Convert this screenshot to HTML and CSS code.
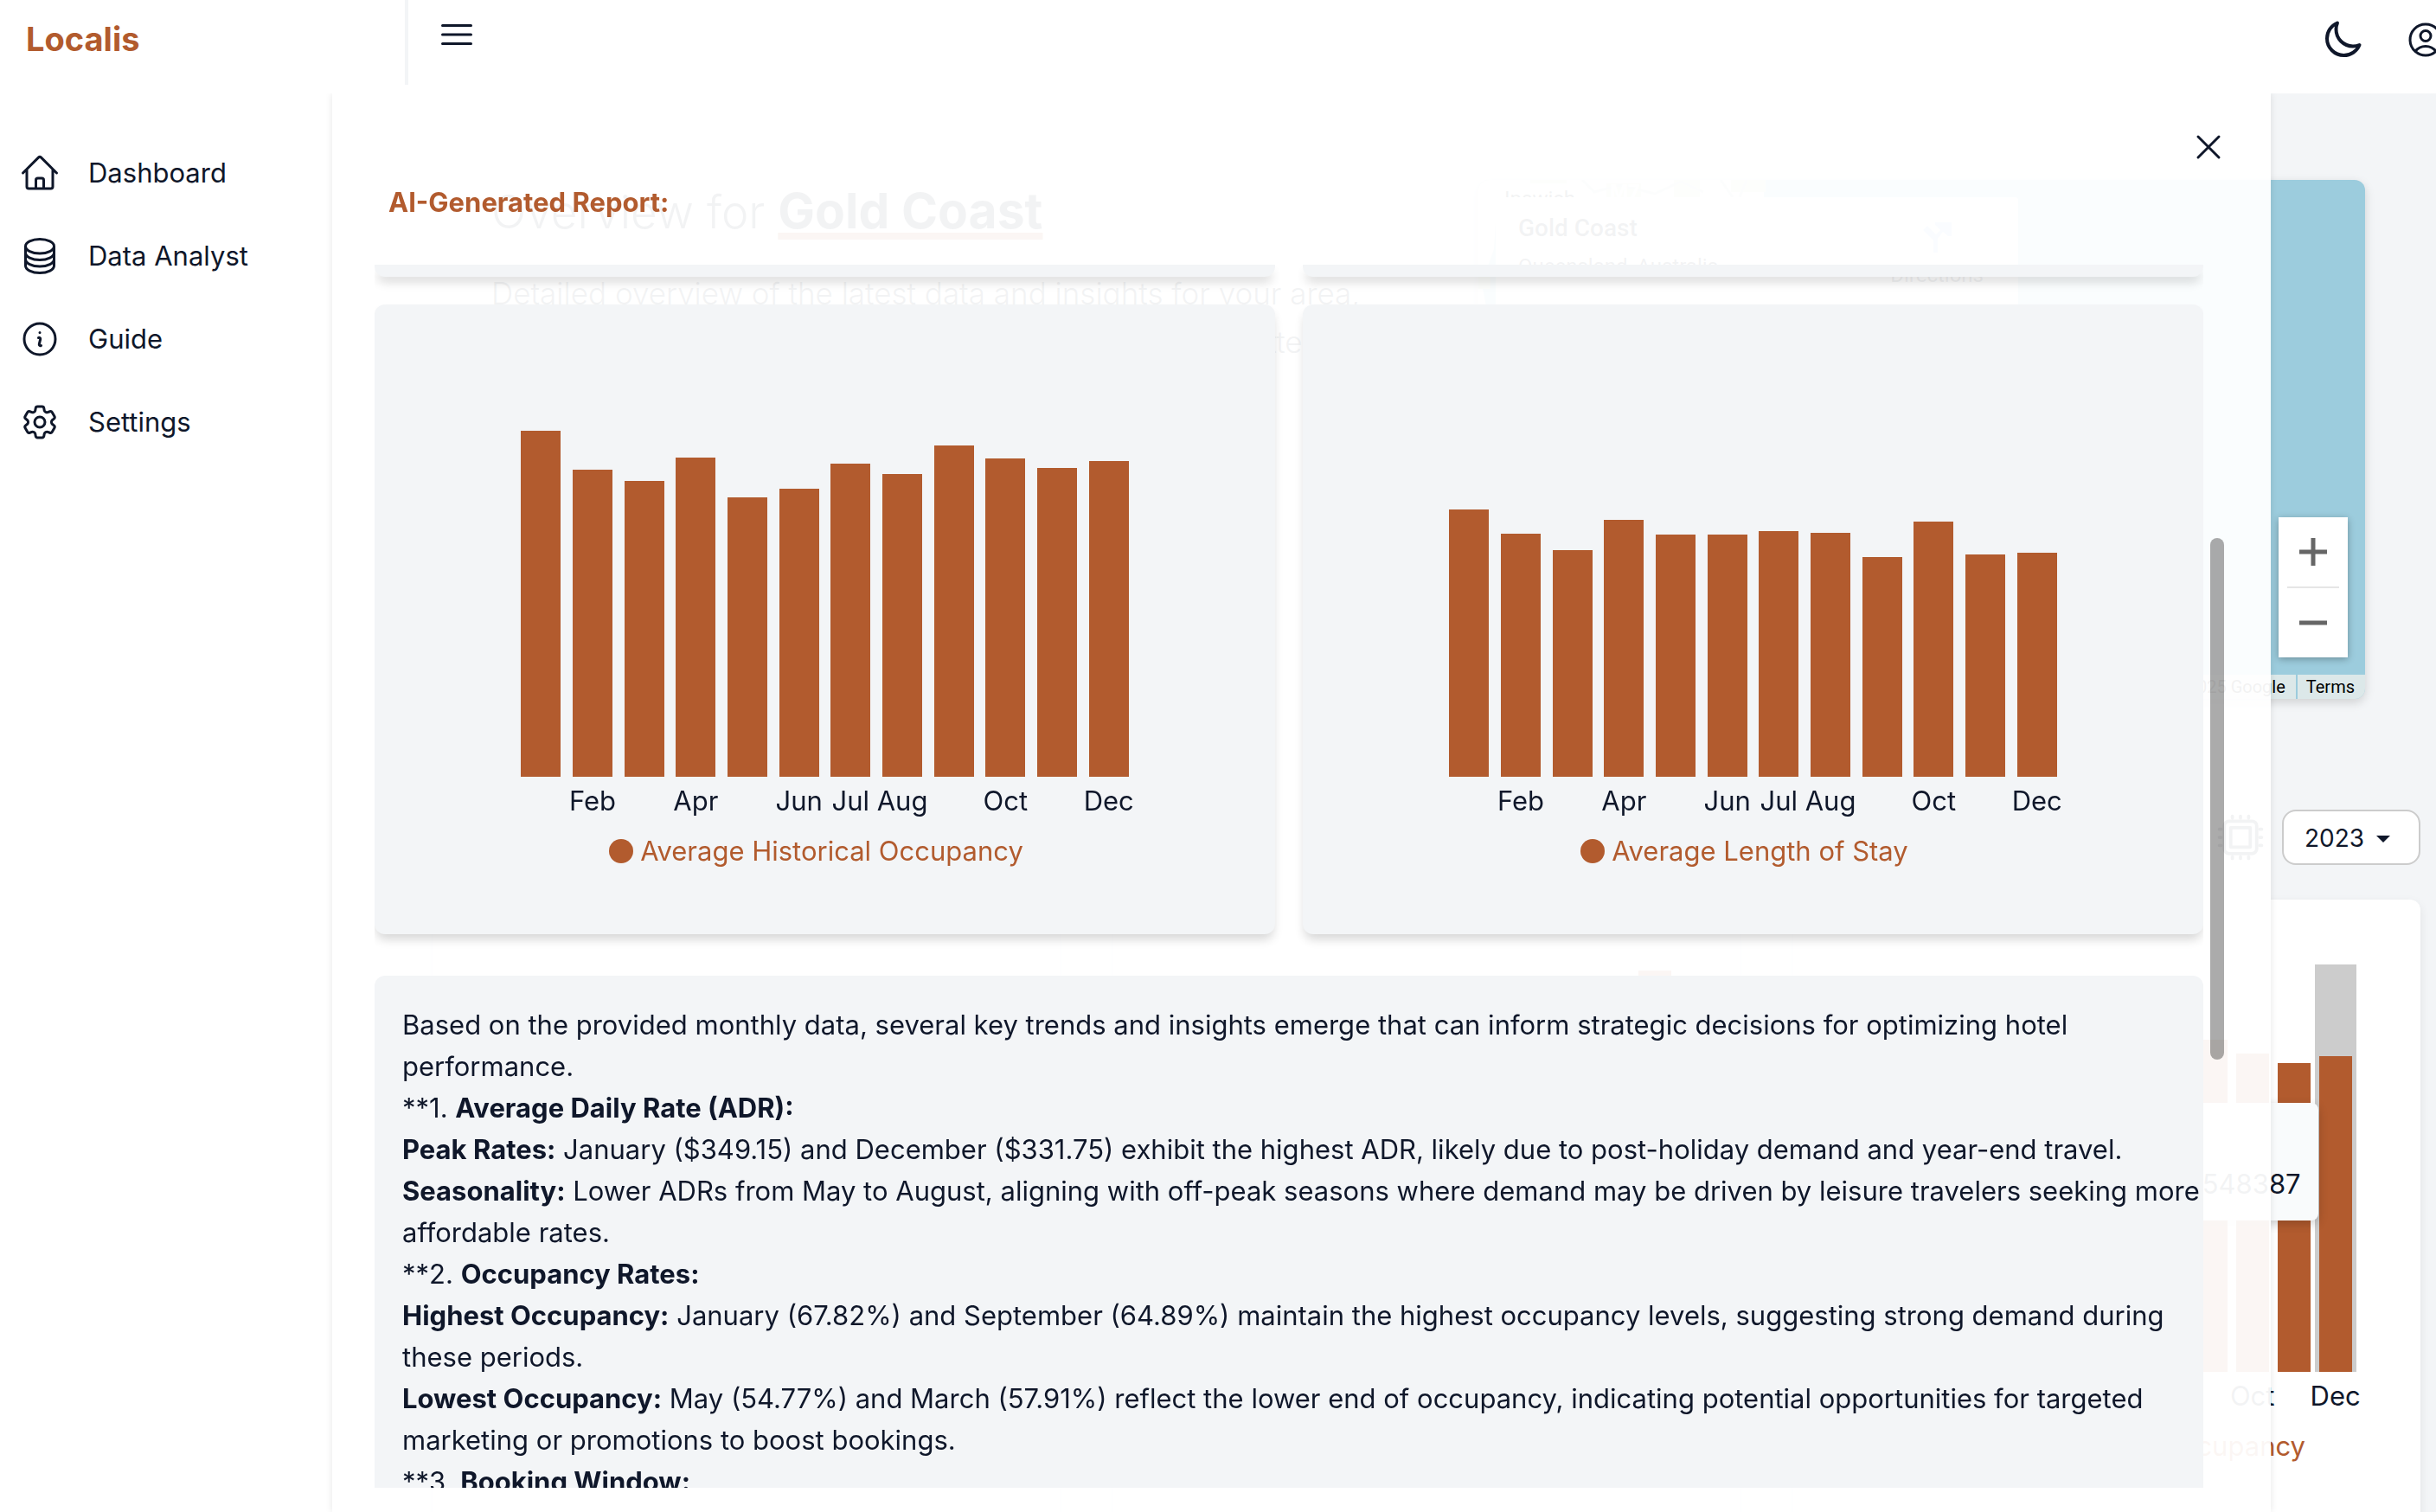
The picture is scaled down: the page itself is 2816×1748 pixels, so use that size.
FILE: index.html
```html
<!DOCTYPE html>
<html lang="en">
<head>
<meta charset="utf-8">
<title>Localis</title>
<link rel="stylesheet" href="styles.css">
</head>
<body>
<header class="topbar">
  <a class="brand" href="#">Localis</a>
  <button class="icon-button menu-button" aria-label="Toggle menu">
    <svg class="icon" viewBox="0 0 24 24"><path d="M3.75 6.75h16.5M3.75 12h16.5m-16.5 5.25h16.5"/></svg>
  </button>
  <div class="topbar-actions">
    <button class="icon-button" aria-label="Dark mode">
      <svg class="icon icon-bold" viewBox="0 0 24 24"><path d="M21.752 15.002A9.718 9.718 0 0 1 18 15.75c-5.385 0-9.75-4.365-9.75-9.75 0-1.33.266-2.597.748-3.752A9.753 9.753 0 0 0 3 11.25C3 16.635 7.365 21 12.75 21a9.753 9.753 0 0 0 9.002-5.998Z"/></svg>
    </button>
    <button class="icon-button" aria-label="Account">
      <svg class="icon" viewBox="0 0 24 24"><path d="M17.982 18.725A7.488 7.488 0 0 0 12 15.75a7.488 7.488 0 0 0-5.982 2.975m11.963 0a9 9 0 1 0-11.963 0m11.963 0A8.966 8.966 0 0 1 12 21a8.966 8.966 0 0 1-5.982-2.275M15 9.75a3 3 0 1 1-6 0 3 3 0 0 1 6 0Z"/></svg>
    </button>
  </div>
</header>

<div class="layout">
  <nav class="sidebar">
    <a class="nav-link" href="#"><svg class="icon" viewBox="0 0 24 24"><path d="m2.25 12 8.954-8.955c.44-.439 1.152-.439 1.591 0L21.75 12M4.5 9.75v10.125c0 .621.504 1.125 1.125 1.125H9.75v-4.875c0-.621.504-1.125 1.125-1.125h2.25c.621 0 1.125.504 1.125 1.125V21h4.125c.621 0 1.125-.504 1.125-1.125V9.75M8.25 21h8.25"/></svg>Dashboard</a>
    <a class="nav-link" href="#"><svg class="icon" viewBox="0 0 24 24"><path d="M20.25 6.375c0 2.278-3.694 4.125-8.25 4.125S3.75 8.653 3.75 6.375m16.5 0c0-2.278-3.694-4.125-8.25-4.125S3.75 4.097 3.75 6.375m16.5 0v11.25c0 2.278-3.694 4.125-8.25 4.125s-8.25-1.847-8.25-4.125V6.375m16.5 0v3.75m-16.5-3.75v3.75m16.5 0v3.75C20.25 16.153 16.556 18 12 18s-8.25-1.847-8.25-4.125v-3.75m16.5 0c0 2.278-3.694 4.125-8.25 4.125s-8.25-1.847-8.25-4.125"/></svg>Data Analyst</a>
    <a class="nav-link" href="#"><svg class="icon" viewBox="0 0 24 24"><path d="m11.25 11.25.041-.02a.75.75 0 0 1 1.063.852l-.708 2.836a.75.75 0 0 0 1.063.853l.041-.021M21 12a9 9 0 1 1-18 0 9 9 0 0 1 18 0Zm-9-3.75h.008v.008H12V8.25Z"/></svg>Guide</a>
    <a class="nav-link" href="#"><svg class="icon" viewBox="0 0 24 24"><path d="M9.594 3.94c.09-.542.56-.94 1.11-.94h2.593c.55 0 1.02.398 1.11.94l.213 1.281c.063.374.313.686.645.87.074.04.147.083.22.127.325.196.72.257 1.075.124l1.217-.456a1.125 1.125 0 0 1 1.37.49l1.296 2.247a1.125 1.125 0 0 1-.26 1.431l-1.003.827c-.293.241-.438.613-.43.992a7.723 7.723 0 0 1 0 .255c-.008.378.137.75.43.991l1.004.827c.424.35.534.955.26 1.43l-1.298 2.247a1.125 1.125 0 0 1-1.369.491l-1.217-.456c-.355-.133-.75-.072-1.076.124a6.47 6.47 0 0 1-.22.128c-.331.183-.581.495-.644.869l-.213 1.281c-.09.543-.56.94-1.11.94h-2.594c-.55 0-1.019-.398-1.11-.94l-.213-1.281c-.062-.374-.312-.686-.644-.87a6.52 6.52 0 0 1-.22-.127c-.325-.196-.72-.257-1.076-.124l-1.217.456a1.125 1.125 0 0 1-1.369-.49l-1.297-2.247a1.125 1.125 0 0 1 .26-1.431l1.004-.827c.292-.24.437-.613.43-.991a6.932 6.932 0 0 1 0-.255c.007-.38-.138-.751-.43-.992l-1.004-.827a1.125 1.125 0 0 1-.26-1.43l1.297-2.247a1.125 1.125 0 0 1 1.37-.491l1.216.456c.356.133.751.072 1.076-.124.072-.044.146-.086.22-.128.332-.183.582-.495.644-.869l.214-1.28Z"/><path d="M15 12a3 3 0 1 1-6 0 3 3 0 0 1 6 0Z"/></svg>Settings</a>
  </nav>

  <main class="dashboard">
    <section class="hero">
      <div class="hero-text">
        <h1 class="hero-title">Overview for <strong>Gold Coast</strong></h1>
        <p class="hero-lead">Detailed overview of the latest data and insights for your area,</p>
        <p class="hero-lead hero-lead-end">to help you plan ahead and make better</p>
      </div>
      <div class="map">
        <svg class="map-land" viewBox="0 0 600 160">
          <path fill="#f1f7ee" d="M0 0h330v20H22l-4 60-14 40 8 40H0z"/>
          <path fill="#cfe8c4" d="M148 4h40v16h-40zM0 112h14v14H0zM60 0h42v4H60zM226 0h30v20h-30zM292 0h40v14h-40z"/>
          <path fill="none" stroke="#c8d3da" stroke-width="3" d="M120 0l14 14 30-8 40 10 30-14 26 12M280 0l14 20M310 0l-8 20"/>
        </svg>
        <span class="map-place">Ipswich</span>
        <span class="map-route">M7</span>
        <div class="map-info">
          <div>
            <p class="map-info-title">Gold Coast</p>
            <p class="map-info-line">Queensland, Australia</p>
          </div>
          <a class="map-directions" href="#"><svg viewBox="0 0 36 36"><path fill="#a3c1f5" d="M14 36V22L2 10l5-5 10 10 5-5-6-6V1h19v16h-4l-6-5-6 8v16z"/></svg>Directions</a>
        </div>
        <div class="map-zoom">
          <button class="zoom-button" aria-label="Zoom in"><svg viewBox="0 0 34 34"><path d="M17 1v32M1 17h32"/></svg></button>
          <button class="zoom-button" aria-label="Zoom out"><svg viewBox="0 0 34 34"><path d="M1 17h32"/></svg></button>
        </div>
        <div class="map-credits"><span class="credit">Map data ©2025 Google</span><a class="credit" href="#">Terms</a></div>
      </div>
    </section>

    <div class="toolbar">
      <svg class="icon icon-chip" viewBox="0 0 24 24"><path d="M8.25 3v-.75M12 3v-.75M15.75 3v-.75M8.25 21v.75M12 21v.75M15.75 21v.75M3 8.25h-.75M3 12h-.75M3 15.75h-.75M21 8.25h.75M21 12h.75M21 15.75h.75M6.75 19.500h10.500a2.250 2.250 0 0 0 2.250-2.250V6.750a2.250 2.250 0 0 0-2.250-2.250H6.750a2.250 2.250 0 0 0-2.250 2.250v10.500a2.250 2.250 0 0 0 2.250 2.250ZM7.500 7.500h9v9h-9z"/></svg>
      <div class="year">
        <select class="year-select" aria-label="Year"><option>2023</option></select>
        <svg class="year-arrow" viewBox="0 0 16 8"><path d="M0 0h16L8 8z"/></svg>
      </div>
    </div>

    <section class="tiles">
      <article class="tile"></article>
      <article class="tile">
        <div class="chart chart-small">
          <div class="bars">
            <div class="slot"><i class="bar" style="height:420px"></i></div><div class="slot"><i class="bar" style="height:400px"></i></div><div class="slot"><i class="bar" style="height:390px"></i></div><div class="slot"><i class="bar" style="height:410px"></i></div><div class="slot"><i class="bar" style="height:380px"></i></div><div class="slot"><i class="bar" style="height:384px"></i></div><div class="slot"><i class="bar" style="height:400px"></i></div><div class="slot"><i class="bar" style="height:396px"></i></div><div class="slot"><i class="bar" style="height:420px"></i></div><div class="slot"><i class="bar" style="height:410px"></i></div><div class="slot"><i class="bar" style="height:406px"></i></div><div class="slot"><i class="bar" style="height:464px"></i></div>
          </div>
        </div>
      </article>
      <article class="tile">
        <div class="chart chart-small">
          <div class="bars">
            <div class="slot"><i class="bar" style="height:400px"></i></div><div class="slot"><i class="bar" style="height:355px"></i></div><div class="slot"><i class="bar" style="height:342px"></i></div><div class="slot"><i class="bar" style="height:369px"></i></div><div class="slot"><i class="bar" style="height:323px"></i></div><div class="slot"><i class="bar" style="height:333px"></i></div><div class="slot"><i class="bar" style="height:362px"></i></div><div class="slot"><i class="bar" style="height:350px"></i></div><div class="slot"><i class="bar" style="height:384px"></i></div><div class="slot"><i class="bar" style="height:368px"></i></div><div class="slot"><i class="bar" style="height:357px"></i></div><div class="slot slot-active"><i class="bar" style="height:365px"></i></div>
          </div>
          <div class="months"><span></span><span>Feb</span><span></span><span>Apr</span><span></span><span>Jun</span><span></span><span>Aug</span><span></span><span>Oct</span><span></span><span>Dec</span></div>
          <p class="legend"><i class="dot"></i>Average Historical Occupancy</p>
          <div class="tooltip"><span>Dec</span><span>value : 61.90548387</span></div>
        </div>
      </article>
    </section>
  </main>
</div>

<section class="drawer" role="dialog" aria-label="AI-Generated Report">
  <button class="icon-button drawer-close" aria-label="Close">
    <svg class="icon" viewBox="0 0 24 24"><path d="M6 18 18 6M6 6l12 12"/></svg>
  </button>
  <h2 class="drawer-title">AI-Generated Report:</h2>
  <div class="report">
    <div class="cards">
      <div class="card card-end"></div>
      <div class="card card-end"></div>
    </div>
    <div class="cards">
      <article class="card">
        <div class="chart">
          <div class="bars">
            <div class="slot"><i class="bar" style="height:400px"></i></div><div class="slot"><i class="bar" style="height:355px"></i></div><div class="slot"><i class="bar" style="height:342px"></i></div><div class="slot"><i class="bar" style="height:369px"></i></div><div class="slot"><i class="bar" style="height:323px"></i></div><div class="slot"><i class="bar" style="height:333px"></i></div><div class="slot"><i class="bar" style="height:362px"></i></div><div class="slot"><i class="bar" style="height:350px"></i></div><div class="slot"><i class="bar" style="height:383px"></i></div><div class="slot"><i class="bar" style="height:368px"></i></div><div class="slot"><i class="bar" style="height:357px"></i></div><div class="slot"><i class="bar" style="height:365px"></i></div>
          </div>
          <div class="months"><span></span><span>Feb</span><span></span><span>Apr</span><span></span><span>Jun</span><span>Jul</span><span>Aug</span><span></span><span>Oct</span><span></span><span>Dec</span></div>
          <p class="legend"><i class="dot"></i>Average Historical Occupancy</p>
        </div>
      </article>
      <article class="card">
        <div class="chart">
          <div class="bars">
            <div class="slot"><i class="bar" style="height:309px"></i></div><div class="slot"><i class="bar" style="height:281px"></i></div><div class="slot"><i class="bar" style="height:262px"></i></div><div class="slot"><i class="bar" style="height:297px"></i></div><div class="slot"><i class="bar" style="height:280px"></i></div><div class="slot"><i class="bar" style="height:280px"></i></div><div class="slot"><i class="bar" style="height:284px"></i></div><div class="slot"><i class="bar" style="height:282px"></i></div><div class="slot"><i class="bar" style="height:254px"></i></div><div class="slot"><i class="bar" style="height:295px"></i></div><div class="slot"><i class="bar" style="height:257px"></i></div><div class="slot"><i class="bar" style="height:259px"></i></div>
          </div>
          <div class="months"><span></span><span>Feb</span><span></span><span>Apr</span><span></span><span>Jun</span><span>Jul</span><span>Aug</span><span></span><span>Oct</span><span></span><span>Dec</span></div>
          <p class="legend"><i class="dot"></i>Average Length of Stay</p>
        </div>
      </article>
    </div>
    <div class="summary">
      <p>Based on the provided monthly data, several key trends and insights emerge that can inform strategic decisions for optimizing hotel performance.</p>
      <p>**1. <strong>Average Daily Rate (ADR):</strong></p>
      <p><strong>Peak Rates:</strong> January ($349.15) and December ($331.75) exhibit the highest ADR, likely due to post-holiday demand and year-end travel.</p>
      <p><strong>Seasonality:</strong> Lower ADRs from May to August, aligning with off-peak seasons where demand may be driven by leisure travelers seeking more affordable rates.</p>
      <p>**2. <strong>Occupancy Rates:</strong></p>
      <p><strong>Highest Occupancy:</strong> January (67.82%) and September (64.89%) maintain the highest occupancy levels, suggesting strong demand during these periods.</p>
      <p><strong>Lowest Occupancy:</strong> May (54.77%) and March (57.91%) reflect the lower end of occupancy, indicating potential opportunities for targeted marketing or promotions to boost bookings.</p>
      <p>**3. <strong>Booking Window:</strong></p>
    </div>
  </div>
  <div class="scroll-thumb"></div>
</section>
</body>
</html>
```

FILE: styles.css
```css
:root {
  --ink: #0f172a;
  --accent: #b25b2e;
  --surface: #f3f5f7;
}

* {
  box-sizing: border-box;
}

body {
  margin: 0;
  height: 100vh;
  overflow: hidden;
  display: flex;
  flex-direction: column;
  background: var(--surface);
  color: var(--ink);
  font: 31px/48px Inter, "Liberation Sans", sans-serif;
}

p, h1, h2 {
  margin: 0;
}

a {
  color: inherit;
  text-decoration: none;
}

strong {
  font-weight: 700;
}

.icon {
  display: block;
  flex: none;
  width: 48px;
  height: 48px;
  fill: none;
  stroke: currentColor;
  stroke-width: 1.5;
  stroke-linecap: round;
  stroke-linejoin: round;
}

.icon-bold {
  stroke-width: 2;
}

.icon-button {
  padding: 0;
  border: 0;
  background: none;
  color: inherit;
}

/* Top bar */
.topbar {
  position: relative;
  z-index: 3;
  flex: none;
  display: flex;
  align-items: flex-start;
  height: 108px;
  background: #fff;
}

.brand {
  width: 472px;
  height: 98px;
  padding: 21px 0 0 30px;
  border-right: 4px solid var(--surface);
  color: var(--accent);
  font-size: 38px;
  font-weight: 700;
}

.menu-button {
  margin: 16px 0 0 32px;
}

.topbar-actions {
  display: flex;
  gap: 48px;
  margin: 22px -12px 0 auto;
}

.layout {
  flex: 1;
  min-height: 0;
  display: grid;
  grid-template-columns: 384px 1fr;
}

/* Sidebar */
.sidebar {
  display: flex;
  flex-direction: column;
  gap: 48px;
  padding: 68px 22px;
  background: #fff;
}

.nav-link {
  display: flex;
  align-items: center;
  gap: 32px;
}

/* Dashboard */
.dashboard {
  min-width: 0;
  overflow: hidden;
  padding: 100px 18px 0 116px;
}

.hero {
  display: flex;
  justify-content: space-between;
  padding: 0 64px 0 68px;
}

.hero-title {
  margin-bottom: 30px;
  font-size: 53px;
  font-weight: 300;
  line-height: 72px;
}

.hero-title strong {
  font-size: 57px;
  text-decoration: underline var(--accent) 8px;
  text-decoration-skip-ink: none;
  text-underline-offset: 5px;
}

.hero-lead {
  font-size: 35px;
  font-weight: 300;
  line-height: 56px;
}

.hero-lead-end {
  padding-right: 54px;
  text-align: right;
}

.map {
  position: relative;
  width: 1025px;
  height: 600px;
  overflow: hidden;
  border-radius: 12px;
  background: #9cccdd;
  box-shadow: 0 4px 12px rgba(0, 0, 0, 0.15);
  font-family: Roboto, sans-serif;
}

.map-land {
  position: absolute;
  top: 0;
  left: 0;
  width: 600px;
  height: 160px;
}

.map-place, .map-route {
  position: absolute;
  top: 8px;
  left: 30px;
  font-size: 24px;
  line-height: 28px;
}

.map-route {
  top: 0;
  left: 152px;
  color: #fff;
  font-size: 24px;
  font-weight: 700;
}

.map-info {
  position: absolute;
  top: 20px;
  left: 20px;
  width: 604px;
  height: 200px;
  display: flex;
  justify-content: space-between;
  padding: 20px 40px 20px 26px;
  border-radius: 4px;
  background: #fff;
}

.map-info-title {
  font-size: 28px;
  font-weight: 500;
  line-height: 32px;
}

.map-info-line {
  margin-top: 12px;
  font-size: 24px;
  line-height: 32px;
}

.map-directions {
  display: flex;
  flex-direction: column;
  align-items: center;
  gap: 12px;
  padding-top: 8px;
  font-size: 24px;
  line-height: 28px;
}

.map-directions svg {
  width: 36px;
  height: 36px;
}

.map-zoom {
  position: absolute;
  right: 20px;
  bottom: 48px;
  width: 80px;
  padding: 0 10px;
  background: #fff;
  box-shadow: 0 2px 8px rgba(0, 0, 0, 0.3);
}

.zoom-button {
  display: grid;
  place-items: center;
  width: 60px;
  height: 80px;
  padding: 0;
  border: 0;
  background: none;
}

.zoom-button + .zoom-button {
  height: 82px;
  border-top: 2px solid #e6e6e6;
}

.zoom-button svg {
  width: 34px;
  height: 34px;
  fill: none;
  stroke: #666;
  stroke-width: 5;
}

.map-credits {
  position: absolute;
  right: 0;
  bottom: 0;
  display: flex;
  gap: 2px;
  color: #000;
  font-size: 20px;
  line-height: 28px;
}

.credit {
  padding: 0 12px 0 10px;
  background: #dce8e9;
}

.toolbar {
  display: flex;
  justify-content: flex-end;
  align-items: center;
  gap: 18px;
  margin: 128px 0 40px;
}

.icon-chip {
  width: 60px;
  height: 60px;
}

.year {
  position: relative;
}

.year-select {
  appearance: none;
  display: block;
  width: 160px;
  height: 64px;
  padding: 2px 24px 0;
  border: 2px solid #ccc;
  border-radius: 16px;
  background: #fff;
  color: inherit;
  font: 28px/40px Inter, "Liberation Sans", sans-serif;
}

.year-arrow {
  position: absolute;
  top: 30px;
  right: 35px;
  width: 16px;
  height: 8px;
  fill: var(--ink);
  pointer-events: none;
}

.tiles {
  display: grid;
  grid-template-columns: repeat(3, 1fr);
  gap: 62px;
}

.tile {
  height: 800px;
  padding-top: 75px;
  border-radius: 12px;
  background: #fff;
  box-shadow: 0 4px 12px rgba(0, 0, 0, 0.08);
}

/* Bar charts */
.chart {
  position: relative;
  width: 716px;
  margin: 0 auto;
}

.bars {
  display: flex;
  height: 466px;
}

.slot {
  flex: 1;
  display: flex;
  justify-content: center;
  align-items: flex-end;
}

.slot-active {
  background: #ccc;
}

.bar {
  width: 46px;
  background: var(--accent);
}

.months {
  display: flex;
  margin: 8px 0 14px;
  line-height: 40px;
}

.months span {
  flex: 1 0 0;
  width: 0;
  display: flex;
  justify-content: center;
}

.legend {
  display: flex;
  justify-content: center;
  align-items: center;
  gap: 8px;
  padding-right: 20px;
  color: var(--accent);
  white-space: nowrap;
}

.dot {
  width: 28px;
  height: 28px;
  border-radius: 50%;
  background: var(--accent);
}

.chart-small {
  width: 576px;
}

.chart-small .bars {
  height: 471px;
}

.chart-small .bar {
  width: 38px;
}

.tooltip {
  position: absolute;
  top: 160px;
  right: 44px;
  display: flex;
  flex-direction: column;
  padding: 22px 20px 18px;
  border-radius: 8px;
  background: #f9fbfc;
  box-shadow: 0 4px 12px rgba(0, 0, 0, 0.2);
}

/* Report drawer */
.drawer {
  position: fixed;
  z-index: 2;
  top: 108px;
  right: 191px;
  bottom: 0;
  left: 384px;
  display: flex;
  flex-direction: column;
  padding: 38px 78px 28px 49px;
  background: rgba(255, 255, 255, 0.95);
  box-shadow: 0 0 8px rgba(0, 0, 0, 0.1);
}

.drawer-close {
  align-self: flex-end;
  margin-right: -30px;
}

.drawer-title {
  margin: 16px 0 48px;
  padding-left: 16px;
  color: var(--accent);
  font-size: 31px;
  font-weight: 700;
}

.report {
  flex: 1;
  min-height: 0;
  overflow: hidden;
}

.cards {
  display: grid;
  grid-template-columns: 1fr 1fr;
  gap: 32px;
  margin-bottom: 32px;
}

.card {
  min-height: 728px;
  padding-top: 80px;
  border-radius: 12px;
  background: var(--surface);
  box-shadow: 0 8px 12px -2px rgba(0, 0, 0, 0.16);
}

.card-end {
  min-height: 14px;
  padding: 0;
  border-radius: 0 0 12px 12px;
}

.summary {
  margin-top: 48px;
  padding: 33px 0 32px 32px;
  border-radius: 12px;
  background: var(--surface);
}

.scroll-thumb {
  position: absolute;
  top: 514px;
  right: 54px;
  width: 16px;
  height: 603px;
  border-radius: 8px;
  background: rgba(0, 0, 0, 0.33);
}
```
